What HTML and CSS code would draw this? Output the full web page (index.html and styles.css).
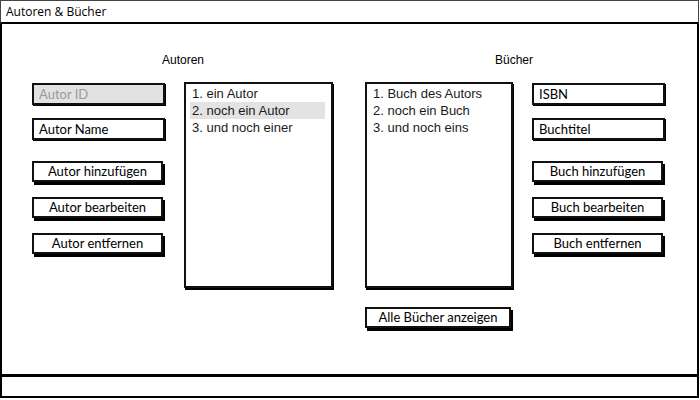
FILE: index.html
```html
<!DOCTYPE html>
<html lang="de">
<head>
<meta charset="utf-8">
<link rel="stylesheet" href="styles.css">
</head>
<body>
<div class="window">
  <div class="titlebar">Autoren &amp; Bücher</div>
  <div class="main">
    <div class="labels">
      <span class="label label-autoren">Autoren</span>
      <span class="label">Bücher</span>
    </div>
    <div class="columns">
      <div class="controls">
        <div class="field field-disabled">Autor ID</div>
        <div class="field field-second">Autor Name</div>
        <div class="button button-first">Autor hinzufügen</div>
        <div class="button">Autor bearbeiten</div>
        <div class="button">Autor entfernen</div>
      </div>
      <div class="gap-a"></div>
      <div class="list list-autoren">
        <div class="item">1. ein Autor</div>
        <div class="item item-selected">2. noch ein Autor</div>
        <div class="item">3. und noch einer</div>
      </div>
      <div class="gap-b"></div>
      <div class="books">
        <div class="list list-buecher">
          <div class="item">1. Buch des Autors</div>
          <div class="item">2. noch ein Buch</div>
          <div class="item">3. und noch eins</div>
        </div>
        <div class="button button-all">Alle Bücher anzeigen</div>
      </div>
      <div class="gap-a"></div>
      <div class="controls">
        <div class="field">ISBN</div>
        <div class="field field-second">Buchtitel</div>
        <div class="button button-first">Buch hinzufügen</div>
        <div class="button">Buch bearbeiten</div>
        <div class="button">Buch entfernen</div>
      </div>
    </div>
  </div>
  <div class="statusbar"></div>
</div>
</body>
</html>
```

FILE: styles.css
```css
* { box-sizing: border-box; }
html, body { margin: 0; padding: 0; background: #fff; }
body { width: 700px; height: 400px; overflow: hidden; color: #000; }

.window { width: 699px; }

.titlebar {
  height: 24px;
  border: 1px solid #444;
  border-bottom: 2px solid #000;
  padding-left: 5px;
  font-family: "Open Sans", "Noto Sans", sans-serif;
  font-size: 12px;
  line-height: 21px;
}

.main {
  height: 352px;
  border: 2px solid #000;
  border-top: none;
}

.labels {
  display: flex;
  height: 58px;
  padding-top: 28px;
  padding-left: 160px;
  font-family: "Liberation Sans", Arial, sans-serif;
  font-size: 12px;
  line-height: 16px;
}
.label-autoren { width: 333px; }

.columns {
  display: grid;
  grid-template-columns: 133px 19px 149px 32px 148px 19px 133px;
  align-items: start;
  padding-left: 30px;
}

.controls { display: flex; flex-direction: column; padding-top: 1px; }

.field {
  height: 22px;
  border: 2px solid #111;
  box-shadow: 1px 1px 0 #000;
  padding-left: 5px;
  font-family: Lato, "Open Sans", sans-serif;
  font-size: 13px;
  line-height: 18px;
  background: #fff;
}
.field-disabled { background: #e2e2e2; color: #9a9a9a; }
.field-second { margin-top: 13px; }

.button {
  height: 21px;
  width: 131px;
  margin-top: 15px;
  border: 2px solid #111;
  box-shadow: 2px 3px 0 #000;
  text-align: center;
  font-family: Lato, "Open Sans", sans-serif;
  font-size: 13px;
  line-height: 17px;
  background: #fff;
}
.button-first { margin-top: 21px; }

.list {
  height: 206px;
  border: 2px solid #111;
  box-shadow: 1px 2px 0 #000;
  padding: 1px 6px 0 4px;
  font-family: "Liberation Sans", Arial, sans-serif;
  font-size: 13px;
  color: #1a1a1a;
}
.item { height: 17px; line-height: 17px; padding-left: 2px; }
.item-selected { background: #e3e3e3; }

.books { display: flex; flex-direction: column; }
.button-all { width: 146px; margin-top: 19px; height: 21px; }

.statusbar {
  height: 22px;
  border: 2px solid #000;
  border-top: 1px solid #000;
}
```
